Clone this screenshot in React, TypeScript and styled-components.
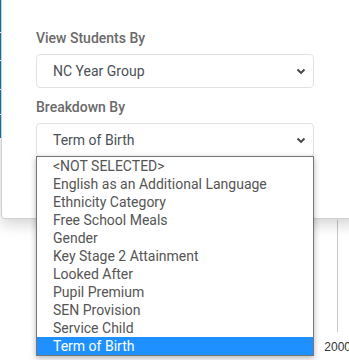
import styled, { createGlobalStyle } from "styled-components";

const GlobalStyle = createGlobalStyle`
  html, body { margin: 0; padding: 0; background: #fff; }
  body { font-family: Roboto, "Liberation Sans", sans-serif; }
`;

const breakdownOptions = [
  "<NOT SELECTED>",
  "English as an Additional Language",
  "Ethnicity Category",
  "Free School Meals",
  "Gender",
  "Key Stage 2 Attainment",
  "Looked After",
  "Pupil Premium",
  "SEN Provision",
  "Service Child",
  "Term of Birth",
];

const Chevron = () => (
  <svg width="10" height="7" viewBox="0 0 10 7">
    <polyline points="1.5,1.5 5,5 8.5,1.5" fill="none" stroke="#444" strokeWidth="1.9" />
  </svg>
);

const App = () => {
  return (
    <>
      <GlobalStyle />
      <Page>
        <Backdrop>
          <SideNav>
            {[32, 27, 28, 24, 23].map((h, i) => (
              <NavTab key={i} $h={h} />
            ))}
          </SideNav>
          <Chart>
            <GridLine />
            <AxisLabel>2000</AxisLabel>
          </Chart>
        </Backdrop>

        <Modal>
          <Field>
            <Label>View Students By</Label>
            <Select>
              <span>NC Year Group</span>
              <Chevron />
            </Select>
          </Field>
          <Field>
            <Label>Breakdown By</Label>
            <Select>
              <span>Term of Birth</span>
              <Chevron />
            </Select>
            <OptionList>
              {breakdownOptions.map((o) => (
                <Option key={o} $selected={o === "Term of Birth"}>
                  {o}
                </Option>
              ))}
            </OptionList>
          </Field>
        </Modal>
      </Page>
    </>
  );
};

export default App;

const Page = styled.div`
  position: relative;
  width: 349px;
  height: 360px;
  overflow: hidden;
  background: #fff;
`;

const Backdrop = styled.div`
  display: flex;
  height: 100%;
`;

const SideNav = styled.div`
  display: flex;
  flex-direction: column;
  gap: 1px;
  width: 2px;
`;

const NavTab = styled.div<{ $h: number }>`
  height: ${(p) => p.$h}px;
  background: #0a7ab8;
`;

const Chart = styled.div`
  flex: 1;
  display: flex;
  flex-direction: column;
  align-items: flex-end;
  padding-top: 220px;
`;

const GridLine = styled.div`
  width: 1px;
  height: 112px;
  background: #c8c8c8;
  margin-right: 11px;
`;

const AxisLabel = styled.div`
  font-family: "Liberation Sans", Arial, sans-serif;
  font-size: 12px;
  color: #333;
  margin-top: 8px;
  margin-right: -2px;
  line-height: 14px;
`;

const Modal = styled.div`
  position: absolute;
  left: 1px;
  top: -10px;
  width: 360px;
  height: 229px;
  box-sizing: border-box;
  background: #fff;
  border: 1px solid #cfcfcf;
  border-radius: 4px;
  box-shadow: 0 5px 15px rgba(0, 0, 0, 0.18);
  padding: 37px 0 0 34px;
  display: flex;
  flex-direction: column;
  gap: 9px;
`;

const Field = styled.div`
  position: relative;
  display: flex;
  flex-direction: column;
  gap: 6px;
`;

const Label = styled.div`
  font-size: 14px;
  line-height: 20px;
  font-weight: 500;
  color: #6a6a6a;
`;

const Select = styled.div`
  width: 278px;
  height: 34px;
  box-sizing: border-box;
  border: 1px solid #e2e2e2;
  border-radius: 4px;
  display: flex;
  align-items: center;
  justify-content: space-between;
  padding: 0 7px 0 16px;
  font-size: 14px;
  color: #495057;
`;

const OptionList = styled.div`
  position: absolute;
  top: 59px;
  left: 0;
  width: 278px;
  box-sizing: border-box;
  border: 1px solid #767676;
  background: #fff;
  box-shadow: 0 2px 6px rgba(0, 0, 0, 0.3);
  z-index: 2;
`;

const Option = styled.div<{ $selected?: boolean }>`
  height: 18px;
  line-height: 18px;
  padding-left: 16px;
  font-size: 14px;
  white-space: nowrap;
  color: ${(p) => (p.$selected ? "#fff" : "#555")};
  background: ${(p) => (p.$selected ? "#1e90ff" : "transparent")};
`;
